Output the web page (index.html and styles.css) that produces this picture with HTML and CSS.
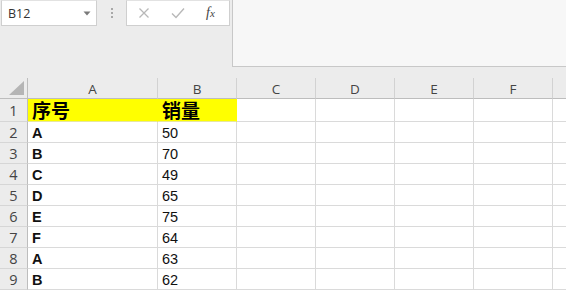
FILE: index.html
```html
<!DOCTYPE html>
<html lang="zh-CN">
<head>
<meta charset="utf-8">
<title>Excel</title>
<link rel="stylesheet" href="styles.css">
</head>
<body>
<div class="app">
  <div class="toolbar">
    <div class="namebox">
      <span class="name">B12</span>
      <svg class="caret" width="8" height="5" viewBox="0 0 8 5"><path d="M0.5 0.5 H7.5 L4 4.5 Z" fill="#7a7a7a"/></svg>
    </div>
    <div class="grip">
      <span class="dot"></span><span class="dot"></span><span class="dot"></span>
    </div>
    <div class="fxbox">
      <svg class="ico" width="14" height="14" viewBox="0 0 14 14"><path d="M2.5 2.5 L11.5 11.5 M11.5 2.5 L2.5 11.5" stroke="#b8b8b8" stroke-width="1.3" fill="none"/></svg>
      <svg class="ico" width="16" height="14" viewBox="0 0 16 14"><path d="M2 7.5 L6 11.5 L14 2.5" stroke="#b8b8b8" stroke-width="1.4" fill="none"/></svg>
      <span class="fx">f<span class="x">x</span></span>
    </div>
    <div class="formula"></div>
  </div>
  <div class="sheet">
    <div class="corner"><svg width="16" height="14" viewBox="0 0 16 14"><path d="M15 0 V14 H0 Z" fill="#b5b5b5"/></svg></div>
    <div class="colh">A</div>
    <div class="colh">B</div>
    <div class="colh">C</div>
    <div class="colh">D</div>
    <div class="colh">E</div>
    <div class="colh">F</div>
    <div class="colh last"></div>

    <div class="rowh tall">1</div>
    <div class="cell hl cn">序号</div>
    <div class="cell hl cn">销量</div>
    <div class="cell"></div><div class="cell"></div><div class="cell"></div><div class="cell"></div><div class="cell last"></div>

    <div class="rowh">2</div>
    <div class="cell b">A</div><div class="cell">50</div>
    <div class="cell"></div><div class="cell"></div><div class="cell"></div><div class="cell"></div><div class="cell last"></div>

    <div class="rowh">3</div>
    <div class="cell b">B</div><div class="cell">70</div>
    <div class="cell"></div><div class="cell"></div><div class="cell"></div><div class="cell"></div><div class="cell last"></div>

    <div class="rowh">4</div>
    <div class="cell b">C</div><div class="cell">49</div>
    <div class="cell"></div><div class="cell"></div><div class="cell"></div><div class="cell"></div><div class="cell last"></div>

    <div class="rowh">5</div>
    <div class="cell b">D</div><div class="cell">65</div>
    <div class="cell"></div><div class="cell"></div><div class="cell"></div><div class="cell"></div><div class="cell last"></div>

    <div class="rowh">6</div>
    <div class="cell b">E</div><div class="cell">75</div>
    <div class="cell"></div><div class="cell"></div><div class="cell"></div><div class="cell"></div><div class="cell last"></div>

    <div class="rowh">7</div>
    <div class="cell b">F</div><div class="cell">64</div>
    <div class="cell"></div><div class="cell"></div><div class="cell"></div><div class="cell"></div><div class="cell last"></div>

    <div class="rowh">8</div>
    <div class="cell b">A</div><div class="cell">63</div>
    <div class="cell"></div><div class="cell"></div><div class="cell"></div><div class="cell"></div><div class="cell last"></div>

    <div class="rowh">9</div>
    <div class="cell b">B</div><div class="cell">62</div>
    <div class="cell"></div><div class="cell"></div><div class="cell"></div><div class="cell"></div><div class="cell last"></div>
  </div>
</div>
</body>
</html>
```
FILE: styles.css
```css
html, body {
  margin: 0;
  padding: 0;
  width: 566px;
  height: 290px;
  overflow: hidden;
  background: #ececec;
}
.app {
  width: 566px;
  height: 290px;
  display: flex;
  flex-direction: column;
  font-family: "Liberation Sans", Arial, sans-serif;
}
.toolbar {
  height: 78px;
  flex: none;
  display: flex;
  align-items: flex-start;
  background: #ececec;
  box-sizing: border-box;
}
.namebox {
  margin-left: 1px;
  width: 96px;
  height: 26px;
  box-sizing: border-box;
  background: #fff;
  border: 1px solid #cfcfcf;
  border-top-color: #e2e2e2;
  display: flex;
  align-items: center;
  justify-content: space-between;
  padding: 0 5px 0 6px;
  font-family: "Open Sans", "Liberation Sans", sans-serif;
  font-size: 12.5px;
  color: #333;
}
.caret { margin-top: 1px; }
.grip {
  width: 29px;
  height: 26px;
  display: flex;
  flex-direction: column;
  align-items: center;
  justify-content: center;
  gap: 2px;
}
.dot {
  width: 2px;
  height: 2px;
  background: #a8a8a8;
}
.fxbox {
  width: 104px;
  height: 26px;
  box-sizing: border-box;
  background: #fff;
  border: 1px solid #cfcfcf;
  border-top-color: #e2e2e2;
  display: flex;
  align-items: center;
  padding: 0 10px 0 10px;
  gap: 19px;
}
.fx {
  font-family: "Liberation Serif", serif;
  font-style: italic;
  font-size: 14px;
  color: #444;
  margin-left: 1px;
}
.fx .x { font-size: 11px; }
.formula {
  margin-left: 2px;
  flex: 1;
  height: 67px;
  box-sizing: border-box;
  background: #f7f7f7;
  border: 1px solid #c8c8c8;
  border-top: none;
  border-right: none;
}
.sheet {
  flex: 1;
  display: grid;
  grid-template-columns: 28px 130px 79px 79px 79px 79px 79px 1fr;
  grid-template-rows: 21px 23px repeat(8, 21px);
  background: #fff;
}
.corner {
  background: #ececec;
  border-right: 1px solid #bdbdbd;
  border-bottom: 1px solid #bdbdbd;
  display: flex;
  align-items: flex-end;
  justify-content: flex-end;
  padding: 0 2px 3px 0;
}
.colh {
  background: #ececec;
  border-bottom: 1px solid #bdbdbd;
  border-right: 1px solid #d2d2d2;
  display: flex;
  align-items: center;
  justify-content: center;
  font-family: "Open Sans", "Liberation Sans", sans-serif;
  font-size: 13.5px;
  color: #444;
  padding-top: 1px;
}
.colh.last { border-right: none; }
.rowh {
  background: #ececec;
  border-right: 1px solid #bdbdbd;
  border-bottom: 1px solid #d6d6d6;
  display: flex;
  align-items: center;
  justify-content: center;
  font-family: "Open Sans", "Liberation Sans", sans-serif;
  font-size: 14.5px;
  color: #444;
  padding-top: 1px;
}
.cell {
  background: #fff;
  border-right: 1px solid #dadada;
  border-bottom: 1px solid #dadada;
  display: flex;
  align-items: center;
  padding: 1px 0 0 4px;
  font-size: 14.5px;
  color: #111;
  line-height: 18px;
  overflow: hidden;
}
.cell.last { border-right: none; }
.cell.b { font-weight: bold; }
.cell.hl {
  background: #ffff00;
  border-right-color: #ffff00;
  border-bottom-color: #e6e6a0;
}
.cell.cn {
  font-family: "Noto Sans CJK SC", "Noto Sans", sans-serif;
  font-weight: bold;
  font-size: 19px;
  line-height: 20px;
  padding-top: 0;
  overflow: visible;
  color: #000;
}
```
